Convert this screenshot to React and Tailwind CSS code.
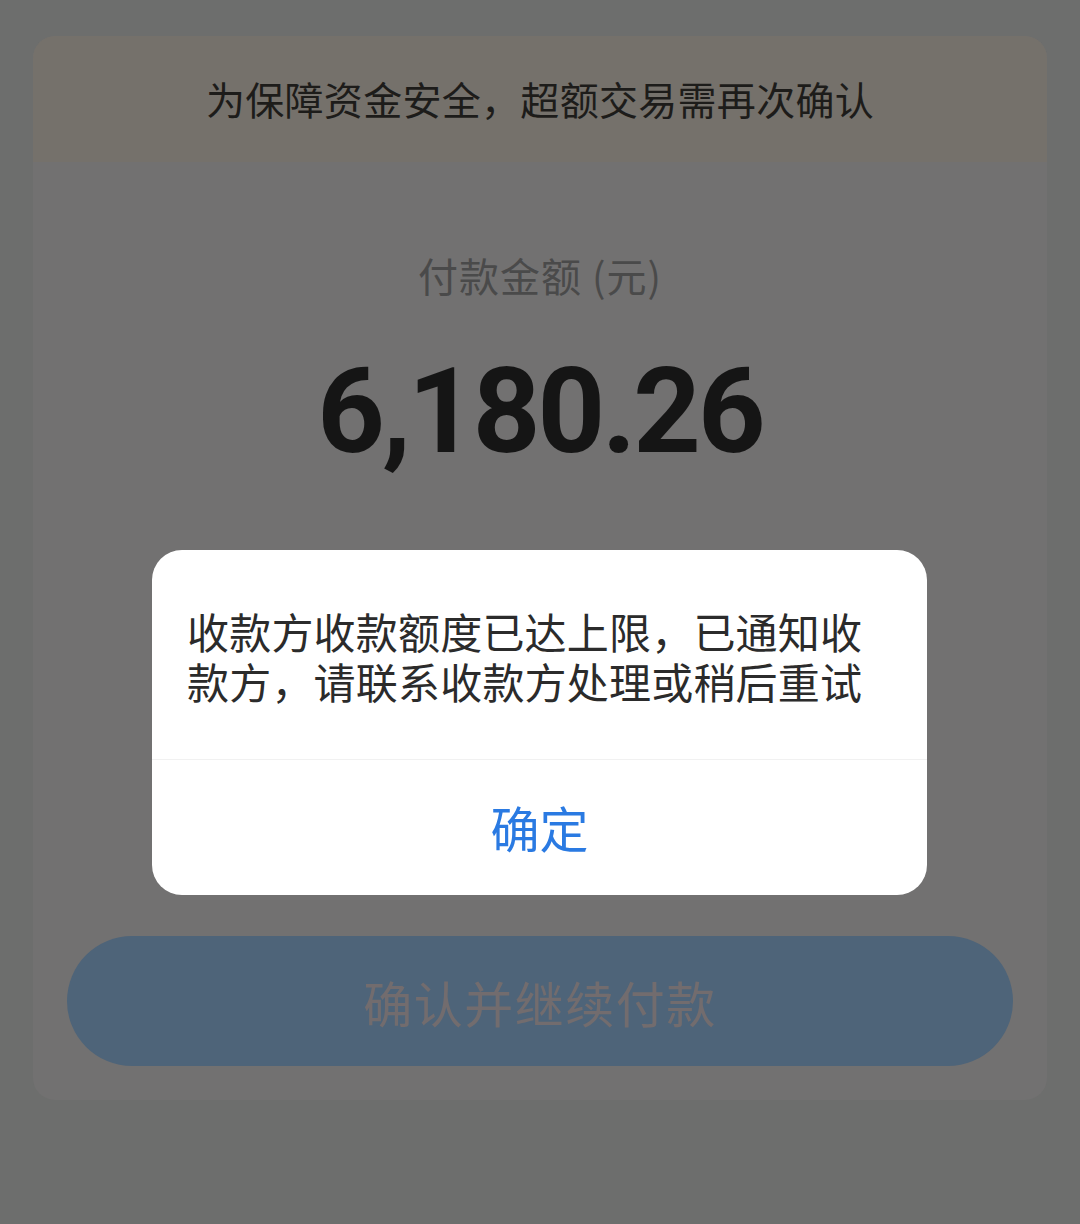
export default function App() {
  const cjk = { fontFamily: '"Noto Sans CJK SC", "Noto Sans", sans-serif' };
  return (
    <div className="relative w-[1080px] h-[1224px] bg-[#6d6e6d] overflow-hidden" style={cjk}>
      <div className="pt-[36px] px-[33px]">
        <div className="w-[1014px] h-[1064px] rounded-[22px] bg-[#727171] overflow-hidden flex flex-col">
          <div className="h-[126px] bg-[#75716b] flex items-center justify-center pb-[2px]">
            <span className="text-[39px] leading-none text-[#1d1c1a] tracking-[0.3px]">为保障资金安全，超额交易需再次确认</span>
          </div>
          <div className="flex flex-col items-center">
            <div className="mt-[93px] text-[40px] leading-none text-[#4a4a4a] tracking-[1px]">付款金额 (元)</div>
            <div
              className="mt-[58px] text-[118px] leading-none font-bold text-[#151515] tracking-[-3px]"
              style={{ fontFamily: 'Roboto, "Liberation Sans", sans-serif' }}
            >
              6,180.26
            </div>
          </div>
          <div className="flex-1" />
          <div className="px-[34px] pb-[34px]">
            <div className="h-[130px] rounded-full bg-[#4e6479] flex items-center justify-center">
              <span className="text-[49px] leading-none text-[#726c6e] tracking-[1.5px]">确认并继续付款</span>
            </div>
          </div>
        </div>
      </div>

      <div className="absolute left-[152px] top-[550px] w-[775px] h-[345px] bg-white rounded-[30px] flex flex-col">
        <div className="h-[210px] border-b border-[#f1f1f1] pl-[35px] pr-[34px] pt-[56px]">
          <p className="text-[42px] leading-[50px] text-[#2b2b2b] tracking-[0.2px]">收款方收款额度已达上限，已通知收款方，请联系收款方处理或稍后重试</p>
        </div>
        <div className="flex-1 flex items-center justify-center pb-[3px]">
          <span className="text-[49px] leading-none text-[#2a7ae2]">确定</span>
        </div>
      </div>
    </div>
  );
}
